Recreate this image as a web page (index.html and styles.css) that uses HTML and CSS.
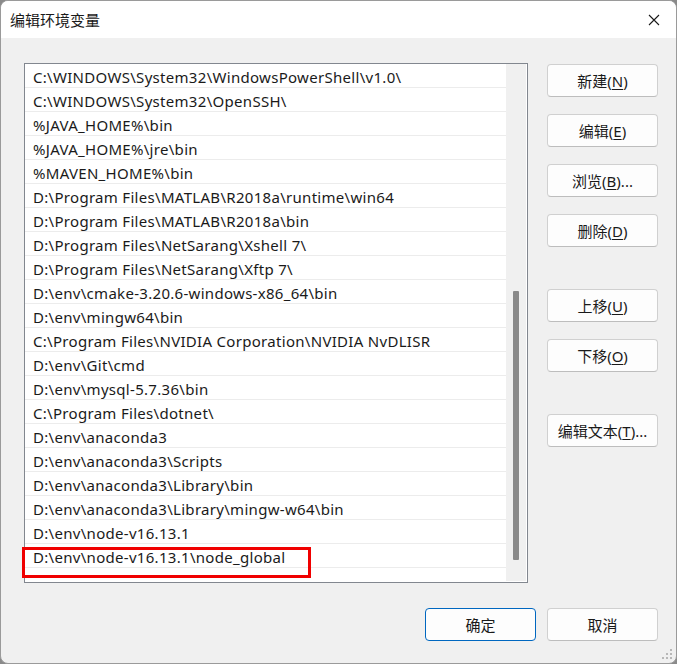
FILE: index.html
```html
<!DOCTYPE html>
<html lang="zh-CN">
<head>
    <meta charset="UTF-8">
    <title>编辑环境变量</title>
    <link rel="stylesheet" href="styles.css">
</head>
<body>
<div class="dialog">
    <div class="titlebar">
        <span class="title">编辑环境变量</span>
        <svg class="close" width="12" height="12" viewBox="0 0 12 12"><path d="M1 1L11 11M11 1L1 11" stroke="#1a1a1a" stroke-width="1.1" fill="none"/></svg>
    </div>
    <div class="content">
        <div class="list">
            <div class="rows">
                <div class="row">C:\WINDOWS\System32\WindowsPowerShell\v1.0\</div>
                <div class="row">C:\WINDOWS\System32\OpenSSH\</div>
                <div class="row">%JAVA_HOME%\bin</div>
                <div class="row">%JAVA_HOME%\jre\bin</div>
                <div class="row">%MAVEN_HOME%\bin</div>
                <div class="row">D:\Program Files\MATLAB\R2018a\runtime\win64</div>
                <div class="row">D:\Program Files\MATLAB\R2018a\bin</div>
                <div class="row">D:\Program Files\NetSarang\Xshell 7\</div>
                <div class="row">D:\Program Files\NetSarang\Xftp 7\</div>
                <div class="row">D:\env\cmake-3.20.6-windows-x86_64\bin</div>
                <div class="row">D:\env\mingw64\bin</div>
                <div class="row">C:\Program Files\NVIDIA Corporation\NVIDIA NvDLISR</div>
                <div class="row">D:\env\Git\cmd</div>
                <div class="row">D:\env\mysql-5.7.36\bin</div>
                <div class="row">C:\Program Files\dotnet\</div>
                <div class="row">D:\env\anaconda3</div>
                <div class="row">D:\env\anaconda3\Scripts</div>
                <div class="row">D:\env\anaconda3\Library\bin</div>
                <div class="row">D:\env\anaconda3\Library\mingw-w64\bin</div>
                <div class="row">D:\env\node-v16.13.1</div>
                <div class="row">D:\env\node-v16.13.1\node_global</div>
            </div>
            <div class="scrollbar"><div class="thumb"></div></div>
            <div class="mark"></div>
        </div>
        <div class="side">
            <button class="btn">新建(<u>N</u>)</button>
            <button class="btn">编辑(<u>E</u>)</button>
            <button class="btn">浏览(<u>B</u>)...</button>
            <button class="btn">删除(<u>D</u>)</button>
            <button class="btn group">上移(<u>U</u>)</button>
            <button class="btn">下移(<u>O</u>)</button>
            <button class="btn group">编辑文本(<u>T</u>)...</button>
        </div>
    </div>
    <div class="footer">
        <button class="btn default">确定</button>
        <button class="btn">取消</button>
    </div>
    <svg class="grip" width="12" height="12" viewBox="0 0 12 12">
        <rect x="8" y="0" width="2" height="2" fill="#b8b8b8"/>
        <rect x="4" y="4" width="2" height="2" fill="#b8b8b8"/>
        <rect x="8" y="4" width="2" height="2" fill="#b8b8b8"/>
        <rect x="0" y="8" width="2" height="2" fill="#b8b8b8"/>
        <rect x="4" y="8" width="2" height="2" fill="#b8b8b8"/>
        <rect x="8" y="8" width="2" height="2" fill="#b8b8b8"/>
    </svg>
</div>
</body>
</html>
```
FILE: styles.css
```css
*{
    padding: 0;
    margin: 0;
    box-sizing: border-box;
}
body{
    background: #8a8a8a;
    font-family: "Noto Sans", "Noto Sans CJK SC", sans-serif;
    font-size: 14px;
    color: #1a1a1a;
}
.dialog{
    position: relative;
    width: 677px;
    height: 664px;
    background: #f0f0f0;
    border: 1px solid #9a9a9a;
    border-radius: 8px;
    overflow: hidden;
}
.titlebar{
    height: 37px;
    background: #fff;
    display: flex;
    align-items: center;
    justify-content: space-between;
    padding: 0 16px 0 9px;
}
.title{
    font-size: 15px;
    font-family: "Noto Sans CJK SC", sans-serif;
}
.content{
    display: flex;
    gap: 19px;
    padding: 25px 0 0 23px;
}
.list{
    position: relative;
    width: 504px;
    height: 520px;
    background: #fff;
    border: 1px solid #82878f;
    display: flex;
    padding: 0 1px 1px 0;
}
.rows{
    flex: 1;
    overflow: hidden;
}
.row{
    height: 24px;
    padding: 3px 0 0 8px;
    line-height: 20px;
    font-size: 15px;
    letter-spacing: 0.3px;
    border-bottom: 1px solid #ececec;
    white-space: nowrap;
}
.scrollbar{
    width: 20px;
    background: #f0f0f0;
    padding: 227px 0 0 7px;
}
.thumb{
    width: 6px;
    height: 269px;
    background: #8a8a8a;
    border-radius: 1px;
}
.mark{
    position: absolute;
    left: -3px;
    top: 483px;
    width: 289px;
    height: 31px;
    border: 3px solid #f00000;
}
.side{
    display: flex;
    flex-direction: column;
    gap: 17px;
    padding-top: 1px;
}
.btn{
    width: 111px;
    height: 33px;
    background: #fdfdfd;
    border: 1px solid #d0d0d0;
    border-bottom-color: #bdbdbd;
    border-radius: 4px;
    font-family: "Noto Sans", "Noto Sans CJK SC", sans-serif;
    font-size: 15px;
    color: #1a1a1a;
}
.btn u{
    text-underline-offset: 2px;
}
.group{
    margin-top: 25px;
}
.footer{
    display: flex;
    justify-content: flex-end;
    gap: 11px;
    padding: 25px 18px 0 0;
}
.default{
    border: 1px solid #0067c0;
}
.grip{
    position: absolute;
    right: 2px;
    bottom: 2px;
}
```
